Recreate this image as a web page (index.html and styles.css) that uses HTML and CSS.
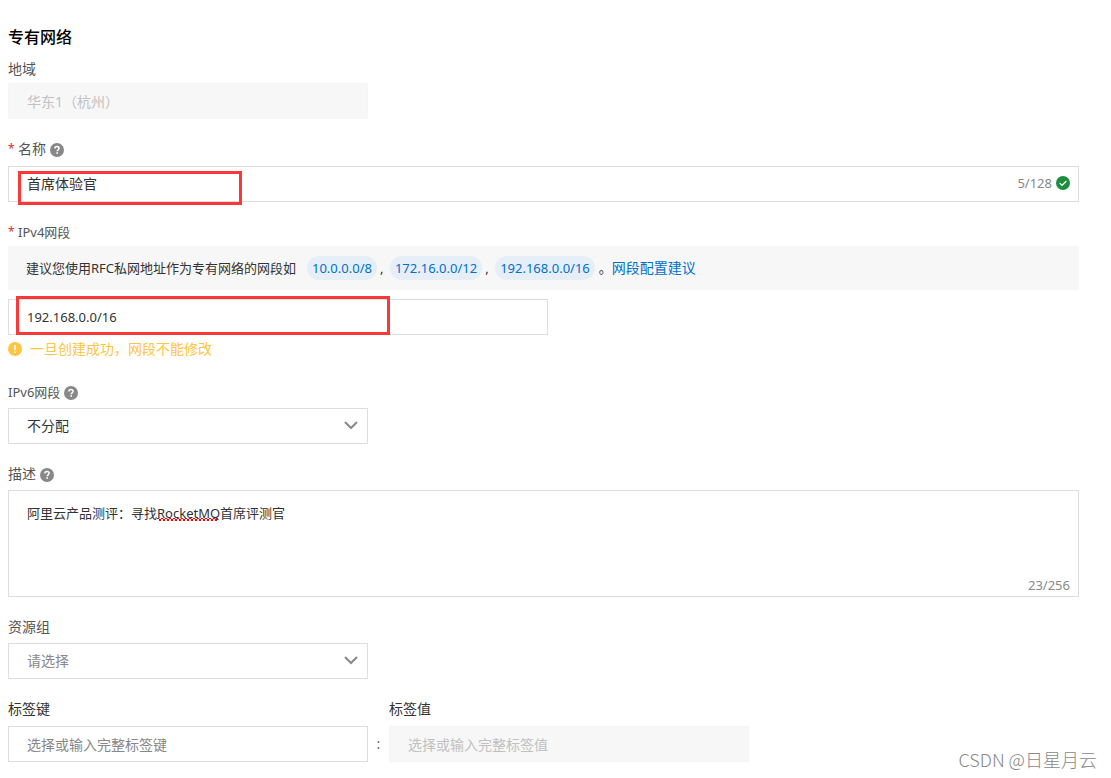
FILE: index.html
```html
<!DOCTYPE html>
<html lang="zh-CN">
<head>
<meta charset="utf-8">
<title>专有网络</title>
<link rel="stylesheet" href="styles.css">
</head>
<body>
<svg class="defs" aria-hidden="true">
  <symbol id="help" viewBox="0 0 14 14">
    <circle cx="7" cy="7" r="7" fill="#888"/>
    <path d="M4.9 5.5c0-1.2.9-2 2.1-2s2.1.7 2.1 1.8c0 1.5-1.9 1.5-1.9 2.9" fill="none" stroke="#fff" stroke-width="1.5"/>
    <rect x="6.4" y="9.2" width="1.6" height="1.6" fill="#fff"/>
  </symbol>
  <symbol id="chevron" viewBox="0 0 14 9">
    <path d="M1 1l6 6 6-6" fill="none" stroke="#888" stroke-width="2"/>
  </symbol>
</svg>
<form class="page">
  <h1 class="title">专有网络</h1>

  <div class="field field-tight">
    <label class="label" for="region">地域</label>
    <input class="control short" id="region" value="华东1（杭州）" disabled>
  </div>

  <div class="field field-loose">
    <div class="label-row">
      <span class="star">*</span><label class="label" for="name">名称</label>
      <svg class="help"><use href="#help"/></svg>
    </div>
    <div class="box">
      <input class="control raised" id="name" value="首席体验官">
      <span class="counter">5/128
        <svg class="ok" viewBox="0 0 14 14"><circle cx="7" cy="7" r="7" fill="#1e8e3e"/><path d="M3.7 7.1l2.3 2.2 4.4-4.3" fill="none" stroke="#fff" stroke-width="1.2"/></svg>
      </span>
      <span class="mark mark-name"></span>
    </div>
  </div>

  <div class="field field-tight">
    <div class="label-row">
      <span class="star">*</span><label class="label latin" for="ipv4">IPv4网段</label>
    </div>
    <div class="note">
      <span class="note-text">建议您使用RFC私网地址作为专有网络的网段如</span>
      <button type="button" class="chip">10.0.0.0/8</button><span class="comma">,</span>
      <button type="button" class="chip">172.16.0.0/12</button><span class="comma">,</span>
      <button type="button" class="chip">192.168.0.0/16</button><span class="stop">。</span>
      <a class="link" href="#">网段配置建议</a>
    </div>
    <div class="box medium">
      <input class="control latin" id="ipv4" value="192.168.0.0/16">
      <span class="mark mark-ipv4"></span>
    </div>
    <p class="warning">
      <svg class="warn-icon" viewBox="0 0 14 14"><circle cx="7" cy="7" r="7" fill="#ffc440"/><path d="M7 3v5M7 9.4v1.6" stroke="#fff" stroke-width="1.7"/></svg>
      一旦创建成功，网段不能修改
    </p>
  </div>

  <div class="field">
    <div class="label-row">
      <label class="label latin" for="ipv6">IPv6网段</label>
      <svg class="help"><use href="#help"/></svg>
    </div>
    <div class="box short">
      <select class="control" id="ipv6"><option>不分配</option></select>
      <svg class="chevron"><use href="#chevron"/></svg>
    </div>
  </div>

  <div class="field">
    <div class="label-row">
      <label class="label" for="desc">描述</label>
      <svg class="help"><use href="#help"/></svg>
    </div>
    <div class="box">
      <textarea class="control area" id="desc" spellcheck="false">阿里云产品测评：寻找RocketMQ首席评测官</textarea>
      <span class="squiggle"></span>
      <span class="counter counter-low">23/256</span>
    </div>
  </div>

  <div class="field">
    <label class="label" for="group">资源组</label>
    <div class="box short">
      <select class="control muted" id="group"><option>请选择</option></select>
      <svg class="chevron"><use href="#chevron"/></svg>
    </div>
  </div>

  <div class="tags">
    <div class="tag">
      <label class="label dark" for="key">标签键</label>
      <input class="control" id="key" placeholder="选择或输入完整标签键">
    </div>
    <span class="colon">:</span>
    <div class="tag">
      <label class="label dark" for="value">标签值</label>
      <input class="control" id="value" placeholder="选择或输入完整标签值" disabled>
    </div>
  </div>
</form>
<div class="watermark">CSDN @日星月云</div>
</body>
</html>
```

FILE: styles.css
```css
* { box-sizing: border-box; }

body {
  margin: 0;
  position: relative;
  min-height: 100vh;
  background: #fff;
  color: #333;
  font: 14px/20px "Noto Sans", "Noto Sans CJK SC", sans-serif;
}

.defs { position: absolute; width: 0; height: 0; }

.page { padding: 24px 32px 16px 8px; }

.title {
  margin: 0 0 11px;
  font-size: 16px;
  line-height: 24px;
  font-weight: 500;
  font-family: "Noto Sans CJK SC", sans-serif;
  color: #000;
}

.field { display: flex; flex-direction: column; gap: 6px; margin-bottom: 20px; }
.field-tight { gap: 4px; }
.field-loose { gap: 7px; }

.label-row { display: flex; align-items: center; gap: 4px; }
.label { color: #555; }
.dark { color: #333; }
.star { width: 6px; color: #d93026; font-size: 12px; }
.help { width: 14px; height: 14px; margin-top: 2px; }

.control {
  display: block;
  width: 100%;
  height: 36px;
  margin: 0;
  padding: 0 18px;
  border: 1px solid #dedede;
  border-radius: 0;
  outline: 0;
  background: #fff;
  color: #333;
  font: inherit;
  line-height: 20px;
  appearance: none;
}
.control::placeholder { color: #888; opacity: 1; }
.control:disabled,
.control:disabled::placeholder { color: #c1c1c1; }
.control:disabled { background: #f7f7f7; border-color: #f5f5f5; }
.raised { padding-bottom: 2px; }
.muted { color: #888; }
.latin { font-size: 13px; }
.short { width: 360px; max-width: 100%; }
.medium { width: 540px; max-width: 100%; }
.area { height: 107px; padding: 12px 18px; font-size: 13px; resize: none; }

.box { position: relative; }

.counter {
  position: absolute;
  top: 7px;
  right: 9px;
  display: flex;
  align-items: center;
  gap: 4px;
  color: #888;
  font-size: 13px;
}
.counter-low { top: auto; bottom: 2px; }
.ok { width: 14px; height: 14px; }

.chevron { position: absolute; top: 13px; right: 10px; width: 14px; height: 9px; pointer-events: none; }

.mark { position: absolute; border: 3px solid #fb3838; pointer-events: none; }
.mark-name { left: 10px; top: 5px; width: 224px; height: 34px; }
.mark-ipv4 { left: 8px; top: -3px; width: 374px; height: 39px; }

.squiggle {
  position: absolute;
  left: 149px;
  top: 28px;
  width: 61px;
  height: 3px;
  background:
    radial-gradient(circle at 1px 0, #f00 1px, transparent 1px) 0 0 / 4px 2px repeat-x,
    radial-gradient(circle at 1px 1px, #f00 1px, transparent 1px) 2px 1px / 4px 2px repeat-x;
  pointer-events: none;
}

.note {
  display: flex;
  align-items: center;
  min-height: 44px;
  padding: 0 18px 1px;
  margin-bottom: 5px;
  background: #f7f7f7;
  font-size: 13px;
}
.note-text { width: 281px; }
.chip {
  height: 24px;
  padding: 0 5px;
  border: 0;
  border-radius: 12px;
  background: #e6eff7;
  color: #0070cc;
  font: inherit;
}
.comma { width: 13px; padding-left: 3px; }
.stop { width: 17px; padding-left: 4px; }
.link { color: #0070cc; text-decoration: none; font-size: 14px; }

.warning {
  display: flex;
  align-items: center;
  gap: 8px;
  margin: 0 0 3px;
  color: #ffc440;
}
.warn-icon { width: 14px; height: 14px; }

.tags { display: flex; align-items: flex-end; }
.tag { display: flex; flex-direction: column; gap: 7px; width: 360px; }
.colon { width: 21px; line-height: 36px; text-align: center; color: #666; }

.watermark {
  position: absolute;
  right: 14px;
  bottom: 7px;
  color: #888;
  font: 300 18px/24px "Noto Sans CJK SC", sans-serif;
}
```
